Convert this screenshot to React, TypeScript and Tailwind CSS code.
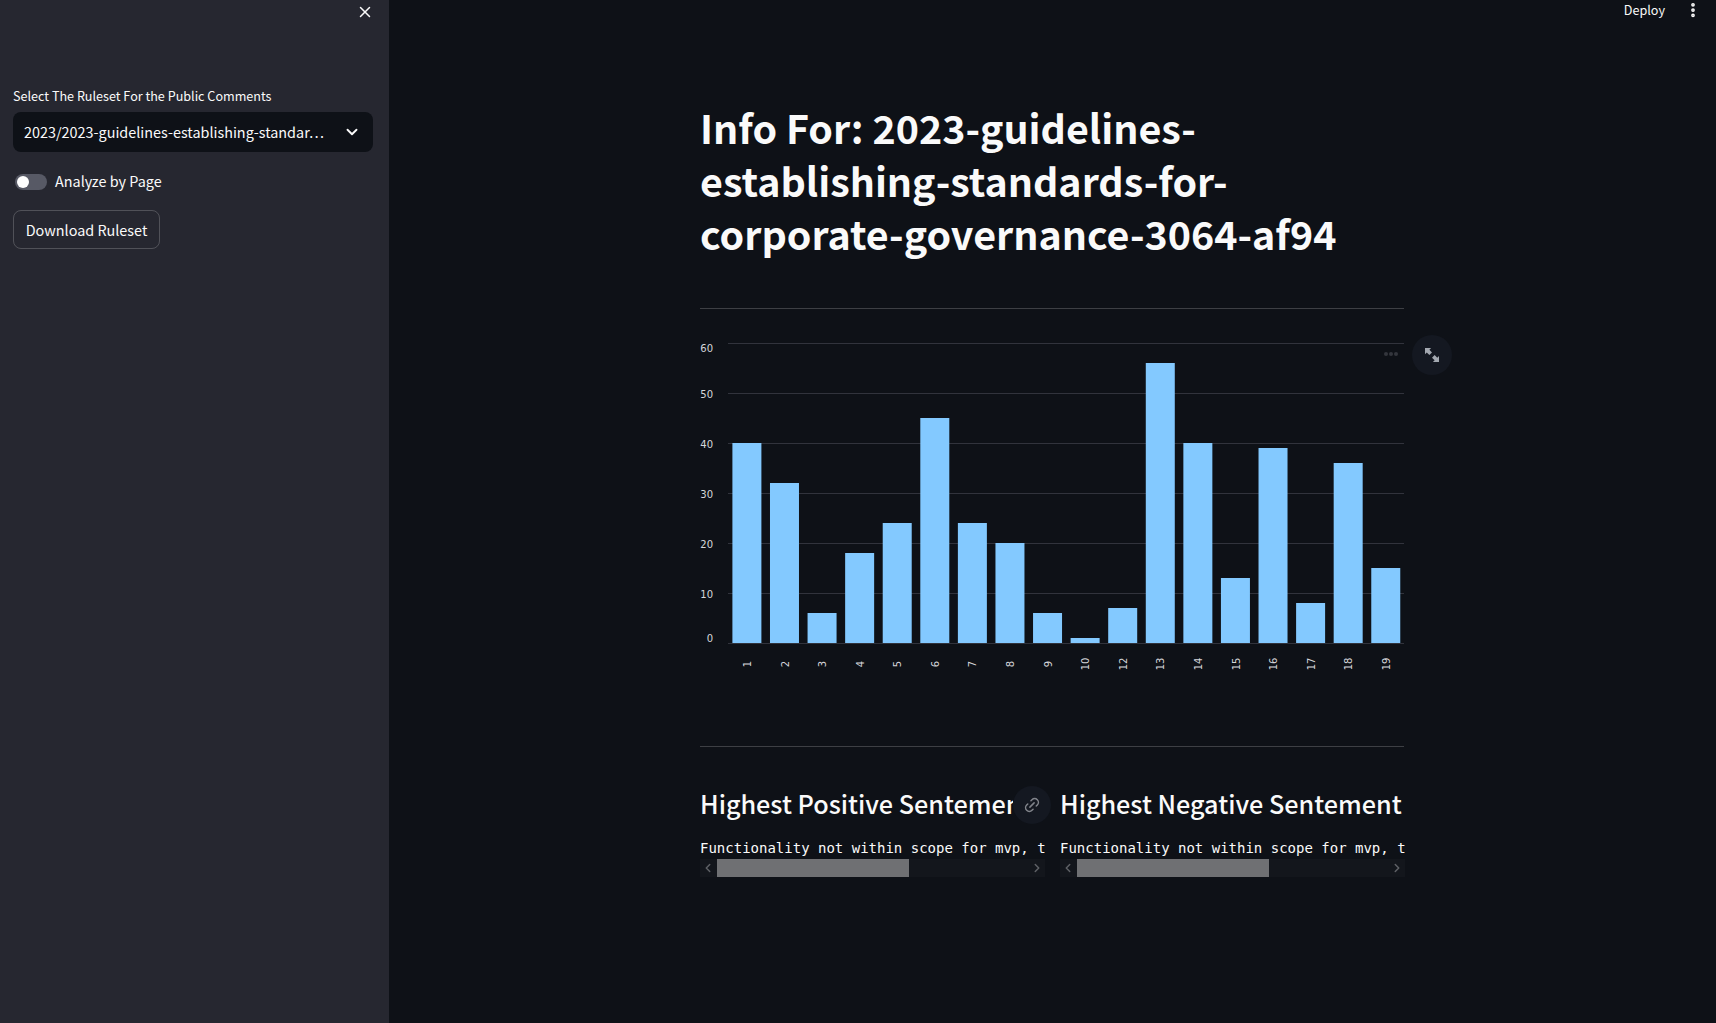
import React from "react";
import { ChevronDown, ChevronLeft, ChevronRight, EllipsisVertical, Link2, X } from "lucide-react";

const bars = [
  { label: "1", value: 40 },
  { label: "2", value: 32 },
  { label: "3", value: 6 },
  { label: "4", value: 18 },
  { label: "5", value: 24 },
  { label: "6", value: 45 },
  { label: "7", value: 24 },
  { label: "8", value: 20 },
  { label: "9", value: 6 },
  { label: "10", value: 1 },
  { label: "12", value: 7 },
  { label: "13", value: 56 },
  { label: "14", value: 40 },
  { label: "15", value: 13 },
  { label: "16", value: 39 },
  { label: "17", value: 8 },
  { label: "18", value: 36 },
  { label: "19", value: 15 },
];

const ticks = [
  { value: 60, dy: 5 },
  { value: 50, dy: 1 },
  { value: 40, dy: 1 },
  { value: 30, dy: 1 },
  { value: 20, dy: 1 },
  { value: 10, dy: 1 },
  { value: 0, dy: -5 },
];

function BarChart() {
  return (
    <svg width={704} height={370} className="block">
      {ticks.map((t) => {
        const y = 313 - t.value * 5;
        return (
          <g key={t.value}>
            <line x1={28} x2={704} y1={y + 0.5} y2={y + 0.5} stroke="#31333c" strokeWidth={1} />
            <text
              x={13}
              y={y + t.dy + 4}
              textAnchor="end"
              fontSize={10}
              fill="#d5d6da"
              fontFamily="DejaVu Sans, sans-serif"
            >
              {t.value}
            </text>
          </g>
        );
      })}
      {bars.map((b, i) => {
        const x = 32.4 + i * 37.58;
        return (
          <g key={b.label}>
            <rect x={x} y={313 - b.value * 5} width={29} height={b.value * 5} fill="#83c9ff" />
            <text
              transform={`translate(${x + 18.6} 334) rotate(-90)`}
              textAnchor="middle"
              fontSize={10}
              fill="#d5d6da"
              fontFamily="DejaVu Sans, sans-serif"
            >
              {b.label}
            </text>
          </g>
        );
      })}
    </svg>
  );
}

function CodeBlock() {
  return (
    <div className="w-[345px] overflow-hidden">
      <div className="h-[22px] whitespace-nowrap overflow-hidden font-['DejaVu_Sans_Mono',monospace] text-[14px] leading-[22px] text-[#fafafa]">
        Functionality not within scope for mvp, the
      </div>
      <div className="flex h-[18px] items-center bg-[#13161c]">
        <ChevronLeft size={14} strokeWidth={2.5} className="ml-[1px] mr-[2px] text-[#5f6166]" />
        <div className="h-[18px] w-[192px] bg-[#6f7073]" />
        <ChevronRight size={14} strokeWidth={2.5} className="ml-auto mr-[1px] text-[#5f6166]" />
      </div>
    </div>
  );
}

export default function App() {
  return (
    <div className="flex h-[1023px] w-full overflow-hidden bg-[#0e1117] font-['Noto_Sans_CJK_JP',sans-serif] text-[#fafafa]">
      {/* sidebar */}
      <div className="h-full w-[389px] shrink-0 bg-[#262730] px-[13px]">
        <div className="flex h-[24px] items-center justify-end">
          <X size={18} strokeWidth={2} className="mr-[-1px] -translate-x-[3px] text-[#fafafa]" />
        </div>
        <div className="mt-[61px] text-[12.6px] leading-[22px]">Select The Ruleset For the Public Comments</div>
        <div className="mt-[5px] flex h-[40px] w-[360px] items-center justify-between rounded-lg bg-[#0e1117] pl-[11px] pr-[12px]">
          <span className="whitespace-nowrap text-[14.4px]">2023/2023-guidelines-establishing-standar…</span>
          <ChevronDown size={18} strokeWidth={2.5} />
        </div>
        <div className="mt-[22px] flex h-[16px] items-center pl-[2px]">
          <div className="flex h-[16px] w-[32px] items-center rounded-full bg-[#575965] pl-[2px]">
            <div className="h-[12px] w-[12px] rounded-full bg-white" />
          </div>
          <span className="ml-[8px] -translate-y-[1px] text-[14.4px] leading-[16px]">Analyze by Page</span>
        </div>
        <button className="mt-[20px] flex h-[39px] w-[147px] items-center justify-center rounded-lg border border-[#fafafa33] text-[14.4px]">
          Download Ruleset
        </button>
      </div>

      {/* main */}
      <div className="relative flex-1">
        <div className="absolute right-[14px] top-0 flex h-[20px] items-center">
          <span className="mr-[19px] text-[12.6px]">Deploy</span>
          <EllipsisVertical size={18} strokeWidth={3} />
        </div>

        <div className="ml-[311px] w-[704px] pt-[100px]">
          <h1 className="whitespace-nowrap text-[39.4px] font-bold leading-[53px]">
            Info For: 2023-guidelines-
            <br />
            establishing-standards-for-
            <br />
            corporate-governance-3064-af94
          </h1>
          <div className="mt-[49px] h-px bg-[#fafafa33]" />

          <div className="relative mt-[21px] h-[416px]">
            <BarChart />
            <div className="absolute left-[684px] top-[22px] flex gap-[1px]">
              <span className="h-[4px] w-[4px] rounded-full bg-[#33363d]" />
              <span className="h-[4px] w-[4px] rounded-full bg-[#33363d]" />
              <span className="h-[4px] w-[4px] rounded-full bg-[#33363d]" />
            </div>
            <div className="absolute left-[712px] top-[5px] flex h-[40px] w-[40px] items-center justify-center rounded-full bg-[#141821]">
              <svg width="14" height="14" viewBox="0 0 16 16" fill="#a3a8b0">
                <path d="M0 0h7L5 2l3 3-3 3-3-3-2 2z" />
                <path d="M16 16H9l2-2-3-3 3-3 3 3 2-2z" />
              </svg>
            </div>
          </div>

          <div className="h-px bg-[#fafafa33]" />

          <div className="mt-[38px] flex gap-[15px]">
            <div className="relative w-[345px]">
              <h3 className="h-[37px] w-[313px] overflow-hidden whitespace-nowrap text-[25.2px] font-medium leading-[37px]">
                Highest Positive Sentement
              </h3>
              <div className="absolute left-[313px] top-[1px] flex h-[38px] w-[38px] items-center justify-center rounded-full bg-[#141821]">
                <Link2 size={18} strokeWidth={2} className="-rotate-45 text-[#80838a]" />
              </div>
              <div className="mt-[15px]">
                <CodeBlock />
              </div>
            </div>
            <div className="w-[345px]">
              <h3 className="h-[37px] overflow-hidden whitespace-nowrap text-[25.2px] font-medium leading-[37px]">
                Highest Negative Sentement
              </h3>
              <div className="mt-[15px]">
                <CodeBlock />
              </div>
            </div>
          </div>
        </div>
      </div>
    </div>
  );
}
